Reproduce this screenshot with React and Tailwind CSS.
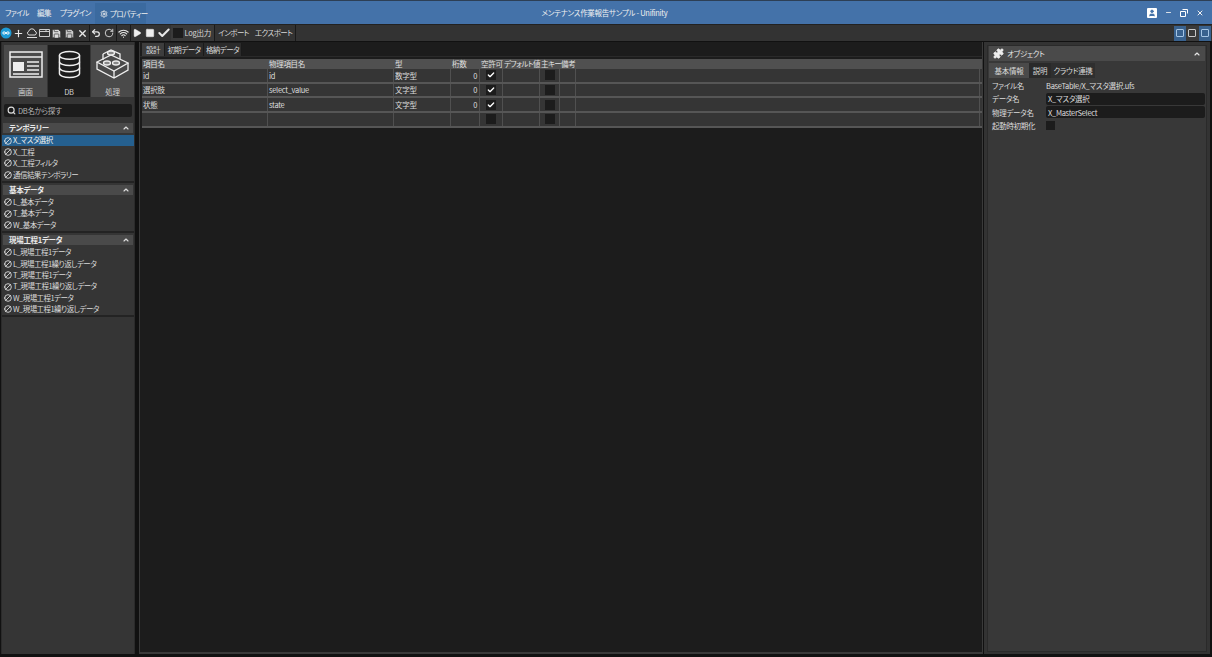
import React from "react";
import { Plus, Save, X, Undo2, RotateCw, Wifi, Play, Square, Check, Search, ChevronUp, Settings, User, Minus, Puzzle, Ban } from "lucide-react";

const Font = "font-['Noto_Sans_CJK_JP','Noto_Sans',sans-serif] [font-feature-settings:'palt'] whitespace-nowrap tracking-[-0.3px]";

function TB({ children, className = "w-[12.67px]" }) {
  return <div className={`h-[16px] flex items-center justify-center text-[#e8e8e8] shrink-0 ${className}`}>{children}</div>;
}
const Sep = () => <div className="w-px h-[16px] bg-[#1a1a1a] shrink-0" />;

function Toolbar() {
  return (
    <div className="h-[16px] flex items-center bg-[#333333] shrink-0">
      <TB>
        <svg width="12" height="12" viewBox="0 0 12 12"><circle cx="6" cy="6" r="5.500" fill="#1e9bd7" /><path d="M6 6c-1-1.500-3.200-1.500-3.200 0s2.200 1.500 3.200 0c1-1.500 3.200-1.500 3.200 0s-2.200 1.500-3.200 0z" fill="none" stroke="#fff" strokeWidth="1" /></svg>
      </TB>
      <TB><Plus size={11} strokeWidth={2.5} /></TB>
      <TB><svg width="12" height="12" viewBox="0 0 12 12" fill="none" stroke="#ddd"><path d="M3 8a2 2 0 0 1-.2-3.800A3.200 3.200 0 0 1 9 4.200 2 2 0 0 1 9 8z" /><path d="M1 10.500h10" /></svg></TB>
      <TB><svg width="11" height="10" viewBox="0 0 11 10" fill="none" stroke="#ccc"><path d="M.5 1.500h10v7H.5z" /><path d="M.5 3.500h10M7 1.500v2" /></svg></TB>
      <TB><Save size={11} fill="#ddd" stroke="#333" strokeWidth={1.5} /></TB>
      <TB><Save size={11} fill="#ccc" stroke="#333" strokeWidth={1.5} /></TB>
      <TB><X size={11} strokeWidth={3} /></TB>
      <Sep />
      <TB className="w-[13px]"><Undo2 size={10} strokeWidth={3} /></TB>
      <TB className="w-[13px]"><RotateCw size={10} strokeWidth={2} /></TB>
      <Sep />
      <TB className="w-[13px]"><Wifi size={11} strokeWidth={2.5} /></TB>
      <Sep />
      <TB className="w-[13px]"><Play size={10} fill="#eee" strokeWidth={1} /></TB>
      <TB className="w-[13px]"><Square size={10} fill="#eee" strokeWidth={1} /></TB>
      <TB className="w-[14px]"><Check size={14} strokeWidth={3.5} /></TB>
      <div className="flex items-center w-[43px] h-[16px] bg-[#3a3a3a] pl-[2px] gap-[2px] text-[7.5px] text-[#d8d8d8] shrink-0">
        <div className="w-[10px] h-[10px] bg-[#1c1c1c]" />
        <span>Log出力</span>
      </div>
      <Sep />
      <div className="w-[38px] text-center text-[7.5px] tracking-[-0.6px] text-[#d8d8d8] shrink-0">インポート</div>
      <div className="w-[42px] text-center text-[7.5px] tracking-[-0.6px] text-[#d8d8d8] shrink-0">エクスポート</div>
      <Sep />
      <div className="flex-1" />
      <div className="flex pr-px">
        <LayoutBtn on /><LayoutBtn /><LayoutBtn on />
      </div>
    </div>
  );
}

function LayoutBtn({ on }) {
  return (
    <div className={`w-[12.500px] h-[15px] flex items-center justify-center ${on ? "bg-[#39628f]" : "bg-[#3a3a3a]"}`}>
      <div className={`w-[8px] h-[8px] border rounded-[1px] ${on ? "border-[#a5c5e5]" : "border-[#c8c8c8]"}`} />
    </div>
  );
}

function IconTab({ label, active, width, children }) {
  return (
    <div className={`${width} h-[52px] flex flex-col items-center ${active ? "bg-[#1c1c1c]" : "bg-[#4a4a4a]"}`}>
      <div className="h-[38px] flex items-center justify-center">{children}</div>
      <span className="text-[7.5px] text-[#d0d0d0] mt-[5px]">{label}</span>
    </div>
  );
}

function Section({ title, items, selected }) {
  return (
    <div className="mb-[2px] border-b-2 border-[#232323]">
      <div className="h-[10px] mx-px bg-[#4a4a4a] flex items-center justify-between pl-[6px] pr-[3px] text-[7.5px] font-bold text-[#e8e8e8]">
        <span>{title}</span>
        <ChevronUp size={8} strokeWidth={3.5} className="text-[#ddd]" />
      </div>
      <div className="pt-[2px]">
        {items.map((t) => (
          <div key={t} className={`h-[11.400px] flex items-center pl-[2px] gap-px text-[7.5px] tracking-[-0.55px] text-[#dadada] ${t === selected ? "bg-[#25608f] text-[#f0f0f0]" : ""}`}>
            <Ban size={8} strokeWidth={2.5} className="shrink-0 text-[#e8e8e8] -scale-x-100" />
            <span className="pb-px">{t}</span>
          </div>
        ))}
      </div>
    </div>
  );
}

function Sidebar() {
  return (
    <div className="w-[134px] ml-px flex flex-col bg-[#353535] h-[612px] border-x border-[#2b2b2b] shrink-0">
      <div className="flex pl-[2px] pt-[3px] gap-px">
        <IconTab label="画面" width="w-[43px]">
          <svg width="34" height="27" viewBox="0 0 34 27" fill="none" stroke="#eee" strokeWidth="1.500"><rect x="1" y="1" width="32" height="25" /><path d="M1 6h32" /><rect x="4" y="11" width="11" height="9" fill="#eee" stroke="none" /><path d="M18 11h12M18 15h12M18 19h12M4 23h26" /></svg>
        </IconTab>
        <IconTab label="DB" active width="w-[42px]">
          <svg width="23" height="29" viewBox="0 0 24 29" fill="none" stroke="#eee" strokeWidth="1.500"><ellipse cx="12" cy="5" rx="10.500" ry="4" /><path d="M1.500 5v19c0 2.200 4.700 4 10.500 4s10.500-1.800 10.500-4V5" /><path d="M1.500 11.500c0 2.200 4.700 4 10.500 4s10.500-1.800 10.500-4M1.500 18c0 2.200 4.700 4 10.500 4s10.500-1.800 10.500-4" /></svg>
        </IconTab>
        <IconTab label="処理" width="w-[43px]">
          <svg width="33" height="31" viewBox="0 0 33 31" fill="none" stroke="#eee" strokeWidth="1.300"><path d="M1 13l14-7 17 8-14 8z" /><path d="M1 13v7l17 9 14-8v-7M18 22v7" /><path d="M7 5l8-4 9 4v5" /><path d="M7 5v6" /><ellipse cx="15" cy="4" rx="3.500" ry="2" fill="#888" /><ellipse cx="20" cy="14" rx="3.500" ry="2" fill="#888" /><ellipse cx="11" cy="14" rx="3.500" ry="2" fill="#888" /></svg>
        </IconTab>
      </div>
      <div className="mt-[7px] mx-[2px] h-[13px] bg-[#1c1c1c] rounded-[2px] flex items-center pl-[3px] gap-[2px] text-[7.5px] text-[#b5b5b5]">
        <Search size={9} strokeWidth={3} className="text-[#ddd]" />
        <span>DB名から探す</span>
      </div>
      <div className="mt-[6px]">
        <Section title="テンポラリー" selected="X_マスタ選択" items={["X_マスタ選択", "X_工程", "X_工程フィルタ", "通信結果テンポラリー"]} />
        <Section title="基本データ" items={["L_基本データ", "T_基本データ", "W_基本データ"]} />
        <Section title="現場工程1データ" items={["L_現場工程1データ", "L_現場工程1繰り返しデータ", "T_現場工程1データ", "T_現場工程1繰り返しデータ", "W_現場工程1データ", "W_現場工程1繰り返しデータ"]} />
      </div>
    </div>
  );
}

const cols = ["w-[126px]", "w-[126px]", "w-[57px]", "w-[29px]", "w-[23px]", "w-[37px]", "w-[20px]", "w-[16px]", "w-[404px]"];
const heads = ["項目名", "物理項目名", "型", "桁数", "空許可", "デフォルト値", "主キー", "備考", ""];

function Cell({ i, children, className = "" }) {
  return <div className={`${cols[i]} h-full border-r border-[#505050] flex items-center px-px shrink-0 ${className}`}>{children}</div>;
}

function Chk({ on }) {
  return (
    <div className="w-[10px] h-[10px] bg-[#1c1c1c] flex items-center justify-center">
      {on && <Check size={8} strokeWidth={4} className="text-white" />}
    </div>
  );
}

function Row({ a, b, t, n, on }) {
  return (
    <div className="h-[14.670px] flex border-b-2 border-[#565656] bg-[#353535] text-[7.5px] text-[#dcdcdc]">
      <Cell i={0}>{a}</Cell>
      <Cell i={1}>{b}</Cell>
      <Cell i={2}>{t}</Cell>
      <Cell i={3} className="justify-end pr-[2px]">{n}</Cell>
      <Cell i={4} className="justify-center"><Chk on={on} /></Cell>
      <Cell i={5} />
      <Cell i={6} className="justify-center"><Chk /></Cell>
      <Cell i={7} />
      <Cell i={8} />
    </div>
  );
}

function Center() {
  return (
    <div className="w-[844px] ml-[4px] h-[612px] bg-[#1c1c1c] border-x border-b-2 border-[#3a3a3a] flex flex-col shrink-0">
      <div className="flex h-[15px] pl-[2px] pt-px text-[7.5px] tracking-[-0.55px] text-[#d8d8d8] border-b-[1px] border-[#2a2a2a] shrink-0">
        <div className="w-[22px] bg-[#3d3d3d] flex items-center justify-center">設計</div>
        <div className="w-[39px] bg-[#2b2b2b] flex items-center justify-center border-l border-[#1a1a1a]">初期データ</div>
        <div className="w-[39px] bg-[#2b2b2b] flex items-center justify-center border-x border-[#1a1a1a]">格納データ</div>
      </div>
      <div className="ml-[2px] mt-[2px]">
        <div className="h-[10px] flex bg-[#505050] text-[7.5px] text-[#e0e0e0]">
          {heads.map((h, i) => (
            <Cell key={i} i={i} className="border-[#2a2a2a]">
              <span className={i === 5 || i === 6 ? "tracking-[-0.6px]" : ""}>{h}</span>
            </Cell>
          ))}
        </div>
        <Row a="id" b="id" t="数字型" n="0" on />
        <Row a="選択肢" b="select_value" t="文字型" n="0" on />
        <Row a="状態" b="state" t="文字型" n="0" on />
        <Row />
      </div>
    </div>
  );
}

function Right() {
  return (
    <div className="w-[226px] ml-px h-[612px] bg-[#333333] p-[3px] pb-[2px] shrink-0">
      <div className="h-full bg-[#383838] border border-[#2a2a2a] px-px">
        <div className="h-[15px] bg-[#4a4a4a] flex items-center justify-between px-[4px] text-[7.5px] text-[#e5e5e5]">
          <div className="flex items-center gap-[3px]"><Puzzle size={11} fill="#eee" stroke="#eee" /><span>オブジェクト</span></div>
          <ChevronUp size={8} strokeWidth={3.5} />
        </div>
        <div className="flex h-[15px] mt-[2px] text-[7.5px] text-[#d8d8d8] bg-[#2a2a2a] w-[106px]">
          <div className="w-[40px] bg-[#4a4a4a] flex items-center justify-center">基本情報</div>
          <div className="w-[22px] bg-[#2a2a2a] flex items-center justify-center">説明</div>
          <div className="w-[44px] bg-[#2f2f2f] flex items-center justify-center">クラウド連携</div>
        </div>
        <div className="text-[7.5px] text-[#dcdcdc] pl-[3px] pt-[0.500px] flex flex-col">
          <PropRow label="ファイル名"><span>BaseTable/X_マスタ選択.ufs</span></PropRow>
          <PropRow label="データ名"><div className="w-full h-[12px] bg-[#1c1c1c] rounded-[2px] pl-[2px] flex items-center">X_マスタ選択</div></PropRow>
          <PropRow label="物理データ名"><div className="w-full h-[12px] bg-[#1c1c1c] rounded-[2px] pl-[2px] flex items-center">X_MasterSelect</div></PropRow>
          <PropRow label="起動時初期化"><div className="w-[9px] h-[9px] bg-[#1c1c1c]" /></PropRow>
        </div>
      </div>
    </div>
  );
}

function PropRow({ label, children }) {
  return (
    <div className="h-[13.500px] flex items-center">
      <div className="w-[54px] shrink-0">{label}</div>
      <div className="flex-1 flex items-center">{children}</div>
    </div>
  );
}

export default function App() {
  return (
    <div className={`w-[1212px] h-[657px] bg-[#111111] overflow-hidden flex flex-col leading-none ${Font}`}>
      <div className="h-[25px] bg-[#4472a9] border-t border-[#2d3f55] border-b border-b-[#222222] flex items-center text-[7.5px] text-[#f0f0f0] shrink-0 relative">
        <div className="pl-[5px] flex items-center h-full tracking-[-0.5px]">
          <span className="w-[32px]">ファイル</span>
          <span className="w-[23px]">編集</span>
          <span className="w-[35px]">プラグイン</span>
          <span className="h-[21px] self-end w-[51px] bg-[#3b6a9f] flex items-center pl-[5px] gap-[2px]"><Settings size={8} strokeWidth={2.5} className="shrink-0" />プロパティー</span>
        </div>
        <div className="flex-1 text-center pr-[84px]">メンテナンス作業報告サンプル - Unifinity</div>
        <div className="flex items-center pr-[8px] gap-[8px]">
          <div className="w-[10px] h-[10px] bg-white rounded-[1px] flex items-center justify-center"><User size={8} fill="#4472a9" stroke="#4472a9" /></div>
          <Minus size={7} strokeWidth={3} />
          <svg width="8" height="8" viewBox="0 0 8 8" fill="none" stroke="#fff"><path d="M2.500.5h5v4M.5 2.500h5v5h-5z" /></svg>
          <X size={8} strokeWidth={3} />
        </div>
      </div>
      <Toolbar />
      <div className="flex mt-px">
        <Sidebar />
        <Center />
        <Right />
      </div>
    </div>
  );
}
